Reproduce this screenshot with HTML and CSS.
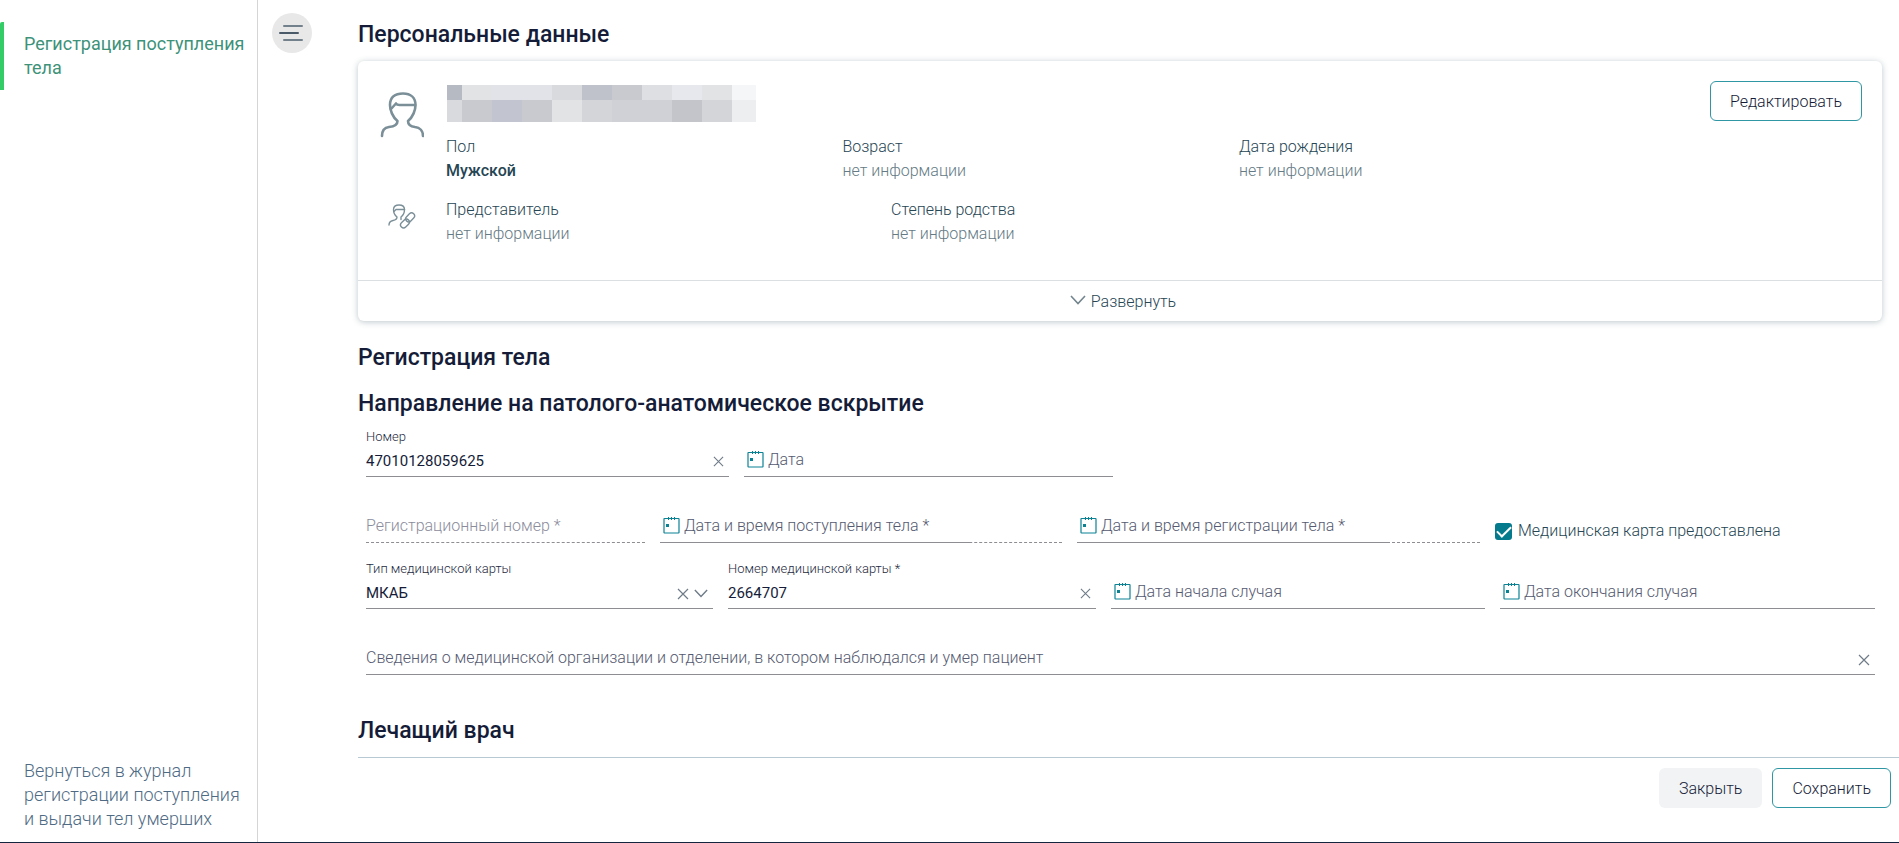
FILE: index.html
```html
<!DOCTYPE html>
<html lang="ru">

<head>
    <meta charset="UTF-8">
    <meta name="viewport" content="width=device-width, initial-scale=1.0">
    <title>Регистрация поступления тела</title>
    <link rel="stylesheet" href="styles.css">
</head>

<body>
    <!-- общие иконки -->
    <svg class="sprite" aria-hidden="true">
        <symbol id="calendar" viewBox="0 0 17 17">
            <path d="M1.500 1.500h14a.5.5 0 0 1 .5.5v13.500a.5.5 0 0 1-.5.5h-14a.5.5 0 0 1-.5-.5V2a.5.5 0 0 1 .5-.5z" fill="none" stroke="currentColor" stroke-width="1.200" />
            <path d="M5.500 0v3M8.500 0v3M11.500 0v3" stroke="currentColor" />
            <path d="M3 7h3v3H3z" fill="currentColor" />
        </symbol>
        <symbol id="cross" viewBox="0 0 12 12">
            <path d="M1 1l10 10M11 1L1 11" fill="none" stroke="currentColor" stroke-width="1.2" />
        </symbol>
        <symbol id="chevron" viewBox="0 0 16 10">
            <path d="M1 1l7 7.500l7-7.500" fill="none" stroke="currentColor" stroke-width="1.600" />
        </symbol>
    </svg>

    <div class="page">
        <aside class="sidebar">
            <a class="menu-link active" href="#">Регистрация поступления тела</a>
            <a class="menu-link back" href="#">Вернуться в журнал регистрации поступления и выдачи тел умерших</a>
        </aside>

        <main class="main">
            <button class="toggle" type="button" aria-label="Меню">
                <svg width="40" height="40" viewBox="0 0 40 40" fill="none" stroke-width="2" stroke-linecap="round">
                    <path d="M12 13h18M12 27h18" stroke="#73818c" />
                    <path d="M8 20h18" stroke="#4a5a68" />
                </svg>
            </button>

            <div class="content">
                <h2 class="title">Персональные данные</h2>
                <section class="card">
                    <div class="person">
                        <svg class="avatar" viewBox="0 0 44 46" width="44" height="46" fill="none" stroke="#7b8f98" stroke-width="2.600" stroke-linecap="round" stroke-linejoin="round">
                            <path d="M2 44c0-6 3-8.500 7-9c5-.500 8.500-1.500 8.500-6c-5-4-7.500-11-7.500-16c0-8 5-11.500 13-11.500s12.500 4.500 12.500 11.500c0 5-2.500 12-7.500 16c0 4.500 3 5.500 7 6c5 .500 8 4 8 9" />
                            <path d="M11 17l5-5.500c1 2 3 1.500 5 1.500h14" />
                        </svg>
                        <div class="person-head">
                            <div class="mosaic">
                                <i class="m1"></i><i class="m2"></i><i class="m3"></i><i class="m3"></i><i class="m4"></i><i class="m5"></i><i class="m6"></i><i class="m7"></i><i class="m8"></i><i class="m2"></i><i class="m9"></i>
                                <i class="m4"></i><i class="m6"></i><i class="m10"></i><i class="m6"></i><i class="m2"></i><i class="m11"></i><i class="m12"></i><i class="m12"></i><i class="m13"></i><i class="m11"></i><i class="m14"></i>
                            </div>
                            <button class="btn outline" type="button">Редактировать</button>
                        </div>
                        <dl class="info">
                            <div>
                                <dt>Пол</dt>
                                <dd class="filled">Мужской</dd>
                            </div>
                            <div>
                                <dt>Возраст</dt>
                                <dd>нет информации</dd>
                            </div>
                            <div>
                                <dt>Дата рождения</dt>
                                <dd>нет информации</dd>
                            </div>
                        </dl>
                        <svg class="relation" viewBox="0 0 28 26" width="28" height="26" fill="none" stroke="#7b8f98" stroke-width="1.400" stroke-linecap="round" stroke-linejoin="round">
                            <path d="M1 21c0-3 1.500-4 4-4.500s4-1 4-3.500c-2.500-2-3.500-5-3.500-7.500C5.500 2 8 1 11 1s5.500 1.500 5.500 4.500c0 2.500-1 5.500-3.500 7.500v2.500" />
                            <path d="M6 7.500l2-2h8.500" />
                            <rect x="17" y="10.500" width="6" height="10" rx="3" transform="rotate(45 20 15.500) translate(0 -3)" />
                            <rect x="14" y="14.500" width="6" height="10" rx="3" transform="rotate(45 17 19.500)" />
                        </svg>
                        <dl class="info wide">
                            <div>
                                <dt>Представитель</dt>
                                <dd>нет информации</dd>
                            </div>
                            <div>
                                <dt>Степень родства</dt>
                                <dd>нет информации</dd>
                            </div>
                        </dl>
                    </div>
                    <button class="expand" type="button">
                        <svg width="16" height="10"><use href="#chevron" /></svg>
                        Развернуть
                    </button>
                </section>

                <h2 class="title register">Регистрация тела</h2>
                <h2 class="title direction">Направление на патолого-анатомическое вскрытие</h2>

                <form class="form">
                    <div class="row row1">
                        <div class="field">
                            <label for="number">Номер</label>
                            <div class="control">
                                <input id="number" type="text" value="47010128059625">
                                <button class="icon-btn" type="button" aria-label="Очистить"><svg width="11" height="11"><use href="#cross" /></svg></button>
                            </div>
                        </div>
                        <div class="field">
                            <div class="control date">
                                <svg width="17" height="17"><use href="#calendar" /></svg>
                                <input type="text" placeholder="Дата" aria-label="Дата">
                            </div>
                        </div>
                    </div>
                    <div class="row row2">
                        <div class="field">
                            <div class="control dashed">
                                <input type="text" placeholder="Регистрационный номер *" aria-label="Регистрационный номер" disabled>
                            </div>
                        </div>
                        <div class="field">
                            <div class="control dashed">
                                <div class="control date part">
                                    <svg width="17" height="17"><use href="#calendar" /></svg>
                                    <input type="text" placeholder="Дата и время поступления тела *" aria-label="Дата и время поступления тела">
                                </div>
                            </div>
                        </div>
                        <div class="field">
                            <div class="control dashed">
                                <div class="control date part">
                                    <svg width="17" height="17"><use href="#calendar" /></svg>
                                    <input type="text" placeholder="Дата и время регистрации тела *" aria-label="Дата и время регистрации тела">
                                </div>
                            </div>
                        </div>
                        <label class="check">
                            <input type="checkbox" checked>
                            Медицинская карта предоставлена
                        </label>
                    </div>
                    <div class="row row3">
                        <div class="field">
                            <label for="cardType">Тип медицинской карты</label>
                            <div class="control">
                                <select id="cardType">
                                    <option>МКАБ</option>
                                </select>
                                <button class="icon-btn" type="button" aria-label="Очистить"><svg width="12" height="12"><use href="#cross" /></svg></button>
                                <svg class="arrow" width="14" height="9"><use href="#chevron" /></svg>
                            </div>
                        </div>
                        <div class="field">
                            <label for="cardNumber">Номер медицинской карты *</label>
                            <div class="control">
                                <input id="cardNumber" type="text" value="2664707">
                                <button class="icon-btn" type="button" aria-label="Очистить"><svg width="11" height="11"><use href="#cross" /></svg></button>
                            </div>
                        </div>
                        <div class="field">
                            <div class="control date">
                                <svg width="17" height="17"><use href="#calendar" /></svg>
                                <input type="text" placeholder="Дата начала случая" aria-label="Дата начала случая">
                            </div>
                        </div>
                        <div class="field">
                            <div class="control date">
                                <svg width="17" height="17"><use href="#calendar" /></svg>
                                <input type="text" placeholder="Дата окончания случая" aria-label="Дата окончания случая">
                            </div>
                        </div>
                    </div>
                    <div class="row">
                        <div class="field">
                            <div class="control">
                                <input type="text" placeholder="Сведения о медицинской организации и отделении, в котором наблюдался и умер пациент" aria-label="Сведения о медицинской организации">
                                <button class="icon-btn" type="button" aria-label="Очистить"><svg width="12" height="12"><use href="#cross" /></svg></button>
                            </div>
                        </div>
                    </div>
                </form>

                <h2 class="title doctor">Лечащий врач</h2>
            </div>

            <footer class="footer">
                <button class="btn gray" type="button">Закрыть</button>
                <button class="btn outline" type="button">Сохранить</button>
            </footer>
        </main>
    </div>
</body>

</html>
```
FILE: styles.css
```css
* {
    box-sizing: border-box;
}

body {
    margin: 0;
    font-family: Roboto, "Liberation Sans", sans-serif;
    font-size: 16px;
    font-weight: 300;
    line-height: 24px;
    color: #264653;
    background: #fff;
}

button,
input,
select {
    font-family: inherit;
    font-size: inherit;
    font-weight: inherit;
    color: inherit;
}

button {
    cursor: pointer;
}

svg {
    display: block;
    flex: none;
}

.sprite {
    position: absolute;
    width: 0;
    height: 0;
}

.page {
    display: flex;
    height: 100vh;
    border-bottom: 1px solid #14263f;
}

/* боковое меню */
.sidebar {
    display: flex;
    flex-direction: column;
    justify-content: space-between;
    flex: none;
    width: 258px;
    padding: 22px 0 1px;
    border-right: 1px solid #d5d5d8;
}

.menu-link {
    padding: 10px 12px 10px 24px;
    font-size: 18px;
    text-decoration: none;
    color: #4f6b84;
}

.menu-link.active {
    padding-left: 20px;
    border-left: 4px solid #33cc66;
    border-top-left-radius: 2px;
    font-weight: 400;
    color: #3d9279;
}

.main {
    display: grid;
    grid-template-columns: 100px 1fr;
    grid-template-rows: 1fr auto;
    flex: 1;
    min-width: 0;
}

.toggle {
    width: 40px;
    height: 40px;
    margin: 13px 0 0 14px;
    padding: 0;
    border: none;
    border-radius: 50%;
    background: #e8e8e8;
}

.content {
    min-width: 0;
    padding: 20px 17px 0 0;
}

.title {
    margin: 0;
    font-size: 23px;
    line-height: 30px;
    font-weight: 500;
    color: #151c38;
}

.register {
    margin-top: 22px;
}

.direction {
    margin-top: 16px;
}

.doctor {
    margin-top: 41px;
}

/* карточка пациента */
.card {
    margin-top: 11px;
    border-radius: 6px;
    box-shadow: 0 1px 6px rgba(38, 70, 83, 0.3);
}

.person {
    display: grid;
    grid-template-columns: 66px 1fr;
    padding: 20px 20px 34px 22px;
}

.avatar {
    grid-row: span 2;
    margin-top: 11px;
}

.relation {
    margin: 21px 0 0 8px;
}

.person-head {
    display: flex;
    justify-content: space-between;
    align-items: flex-start;
}

.mosaic {
    display: grid;
    grid-template-columns: 15px repeat(9, 30px) 24px;
    grid-template-rows: 15px 22px;
    margin: 4px 0 0 1px;
}

.m1 { background: #b6bac2; }
.m2 { background: #e2e3e5; }
.m3 { background: #e2e3e8; }
.m4 { background: #d9dade; }
.m5 { background: #bfc2cb; }
.m6 { background: #c9cacf; }
.m7 { background: #dedfe3; }
.m8 { background: #e7e8ed; }
.m9 { background: #f5f6f8; }
.m10 { background: #c2c5cf; }
.m11 { background: #d4d5d9; }
.m12 { background: #d0d1d7; }
.m13 { background: #c4c5cb; }
.m14 { background: #edeef0; }

.info {
    display: flex;
    margin: 13px 0 0;
}

.info > div {
    width: 28%;
}

.info.wide {
    margin-top: 15px;
}

.info.wide > div {
    width: 445px;
}

.info dd {
    margin: 0;
    color: #647a84;
}

.info .filled {
    font-weight: 500;
    color: #264653;
}

.expand {
    display: flex;
    justify-content: center;
    align-items: center;
    gap: 5px;
    width: 100%;
    height: 41px;
    padding: 0 0 0 6px;
    border: none;
    border-top: 1px solid #dcdfe1;
    background: none;
}

.expand svg {
    margin-bottom: 2px;
    color: #73858e;
}

.btn {
    height: 40px;
    padding: 0 19px;
    border: 1px solid transparent;
    border-radius: 6px;
    color: #151c38;
}

.btn.outline {
    border-color: #2f96a3;
    background: #fff;
}

.btn.gray {
    background: #f2f3f5;
}

/* поля формы */
.form {
    padding: 0 7px 0 8px;
}

.row {
    display: grid;
    gap: 15px;
    margin-bottom: 8px;
}

.row1 {
    grid-template-columns: 363fr 369fr 747fr;
}

.row2 {
    grid-template-columns: 279fr 402fr 403fr 380fr;
}

.row3 {
    grid-template-columns: 347fr 368fr 374fr 375fr;
}

.field {
    display: flex;
    flex-direction: column;
    justify-content: flex-end;
    height: 58px;
    min-width: 0;
}

.field label {
    font-size: 13px;
    line-height: 16px;
    color: #262b42;
}

.control {
    display: flex;
    align-items: center;
    height: 32px;
    border-bottom: 1px solid #8e8e92;
}

.control.dashed {
    border-bottom-style: dashed;
}

.control.part {
    width: 77%;
    margin-bottom: -1px;
}

.control input,
.control select {
    flex: 1;
    min-width: 0;
    height: 31px;
    padding: 0;
    border: none;
    outline: none;
    background: none;
    appearance: none;
    font-size: 15px;
    font-weight: 400;
    color: #151c38;
}

.control input:placeholder-shown {
    padding-bottom: 2px;
    font-size: 16px;
    font-weight: 300;
}

.control input::placeholder {
    color: #555a70;
    opacity: 1;
}

.control input:disabled::placeholder {
    color: #8b8d9c;
}

.date {
    gap: 4px;
    padding-left: 3px;
    color: #0a8294;
}

.date svg {
    margin-bottom: 3px;
}

.icon-btn {
    padding: 0 5px;
    border: none;
    background: none;
    color: #6f7b88;
}

.icon-btn svg {
    margin-top: 2px;
}

.arrow {
    margin: 2px 5px 0 0;
    color: #6f7b88;
}

.check {
    display: flex;
    align-items: center;
    gap: 6px;
    padding-top: 34px;
}

.check input {
    display: grid;
    place-items: center;
    width: 17px;
    height: 17px;
    margin: 0;
    border-radius: 3px;
    background: #057a8c;
    appearance: none;
}

.check input:checked::after {
    content: "";
    width: 12px;
    height: 6px;
    margin-bottom: 3px;
    border: solid #fff;
    border-width: 0 0 2px 2px;
    transform: rotate(-45deg);
}

.footer {
    grid-column: 2;
    display: flex;
    justify-content: flex-end;
    gap: 10px;
    padding: 10px 8px 34px;
    border-top: 1px solid #b7c9d3;
}
```
